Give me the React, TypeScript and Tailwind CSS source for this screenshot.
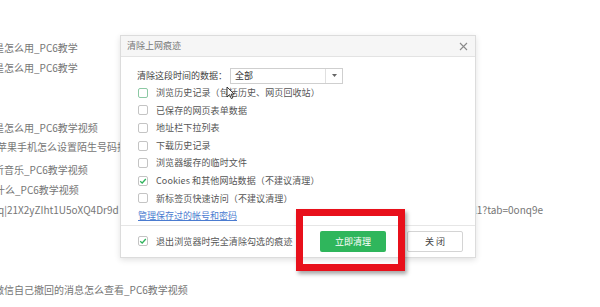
import React from "react";

const F = { fontFamily: '"Noto Sans CJK SC", "Noto Sans", sans-serif' } as React.CSSProperties;

function Box({ checked, hover }: { checked?: boolean; hover?: boolean }) {
  return (
    <div
      className={`w-[10px] h-[10px] rounded-[2px] border bg-white flex items-center justify-center shrink-0 ${
        hover ? "border-[#8cc9a4]" : "border-[#c4c4c4]"
      }`}
    >
      {checked && (
        <svg width="8" height="8" viewBox="0 0 8 8">
          <path d="M1.2 4.2 L3.2 6 L6.8 2" fill="none" stroke="#2fb35c" strokeWidth="1.3" />
        </svg>
      )}
    </div>
  );
}

function Row({ label, checked, hover }: { label: string; checked?: boolean; hover?: boolean }) {
  return (
    <div className="h-[17.6px] flex items-center pl-[17px]">
      <Box checked={checked} hover={hover} />
      <span className="ml-[8px] text-[9px] text-[#555] tracking-[0.1px] whitespace-nowrap">{label}</span>
    </div>
  );
}

export default function App() {
  const bg = "text-[10px] text-[#767676] h-[20px] leading-[20px] whitespace-nowrap";
  return (
    <div className="relative w-[600px] h-[307px] bg-white overflow-hidden" style={F}>
      {/* background list */}
      <div className="flex flex-col pt-[38px]">
        <div className={`${bg} ml-[-6px]`}>是怎么用_PC6教学</div>
        <div className={`${bg} ml-[-6px]`}>是怎么用_PC6教学</div>
        <div className={`${bg} ml-[-6px] mt-[40px]`}>是怎么用_PC6教学视频</div>
        <div className={`${bg} ml-[-3px] mt-[-1px]`}>苹果手机怎么设置陌生号码拦截</div>
        <div className={`${bg} ml-[-6px] mt-[3px]`}>听音乐_PC6教学视频</div>
        <div className={`${bg} ml-[-5px]`}>什么_PC6教学视频</div>
        <div className={`${bg} flex`}>
          <span className="w-[476px] ml-[-2px] shrink-0">q|21X2yZIht1U5oXQ4Dr9d</span>
          <span>l1?tab=0onq9e</span>
        </div>
        <div className={`${bg} ml-[-6px] mt-[60px]`}>微信自己撤回的消息怎么查看_PC6教学视频</div>
      </div>

      {/* dialog */}
      <div className="absolute left-[120px] top-[35px] w-[356px] h-[223px] bg-white border border-[#dcdcdc] shadow-[0_2px_6px_rgba(0,0,0,0.12)] flex flex-col">
        <div className="h-[21px] bg-[#f6f6f6] border-b border-[#e3e3e3] flex items-center justify-between pl-[6px] pr-[7px] shrink-0">
          <span className="text-[9px] text-[#777]">清除上网痕迹</span>
          <svg width="9" height="9" viewBox="0 0 9 9">
            <path d="M1 1 L8 8 M8 1 L1 8" stroke="#8a8a8a" strokeWidth="1.1" />
          </svg>
        </div>
        <div className="flex flex-col pt-[10px]">
          <div className="h-[17px] flex items-center pl-[16px]">
            <span className="text-[9px] text-[#444] w-[93px] whitespace-nowrap">清除这段时间的数据：</span>
            <div className="w-[113px] h-[16px] border border-[#cfcfcf] flex items-center">
              <span className="text-[9px] text-[#333] pl-[4px] flex-1">全部</span>
              <div className="w-[17px] h-full border-l border-[#e0e0e0] flex items-center justify-center">
                <svg width="5" height="3" viewBox="0 0 5 3">
                  <path d="M0 0 L5 0 L2.5 3 Z" fill="#666" />
                </svg>
              </div>
            </div>
          </div>
          <Row label="浏览历史记录（包括历史、网页回收站）" hover />
          <Row label="已保存的网页表单数据" />
          <Row label="地址栏下拉列表" />
          <Row label="下载历史记录" />
          <Row label="浏览器缓存的临时文件" />
          <Row label="Cookies 和其他网站数据（不建议清理）" checked />
          <Row label="新标签页快速访问（不建议清理）" />
          <div className="h-[17.6px] flex items-center pl-[17px]">
            <span className="text-[9px] text-[#4a7bd0] underline whitespace-nowrap">管理保存过的帐号和密码</span>
          </div>
        </div>
        <div className="border-t border-[#e6e6e6] flex-1 flex items-center pl-[17px] pr-[12px]">
          <Box checked />
          <span className="ml-[8px] text-[9px] text-[#555] tracking-[0.1px] whitespace-nowrap">退出浏览器时完全清除勾选的痕迹</span>
          <div className="ml-auto flex items-center gap-[21px]">
            <div className="w-[66px] h-[21px] bg-[#2fb65c] rounded-[2px] flex items-center justify-center text-[9px] text-white">立即清理</div>
            <div className="w-[56px] h-[21px] bg-white border border-[#d4d4d4] rounded-[2px] flex items-center justify-center text-[9px] text-[#444]">关 闭</div>
          </div>
        </div>
      </div>

      {/* cursor */}
      <svg className="absolute left-[226px] top-[86px]" width="9" height="14" viewBox="0 0 9 14">
        <path d="M1 1 L1 11 L3.5 8.6 L5.3 12.6 L6.8 11.9 L5.1 8.1 L8.2 8.1 Z" fill="#fff" stroke="#222" strokeWidth="0.9" />
      </svg>

      {/* red highlight */}
      <div className="absolute left-[296px] top-[209px] w-[109px] h-[62px] border-[7px] border-[#e8101b] shadow-[2px_3px_4px_rgba(0,0,0,0.35)]" />
    </div>
  );
}
